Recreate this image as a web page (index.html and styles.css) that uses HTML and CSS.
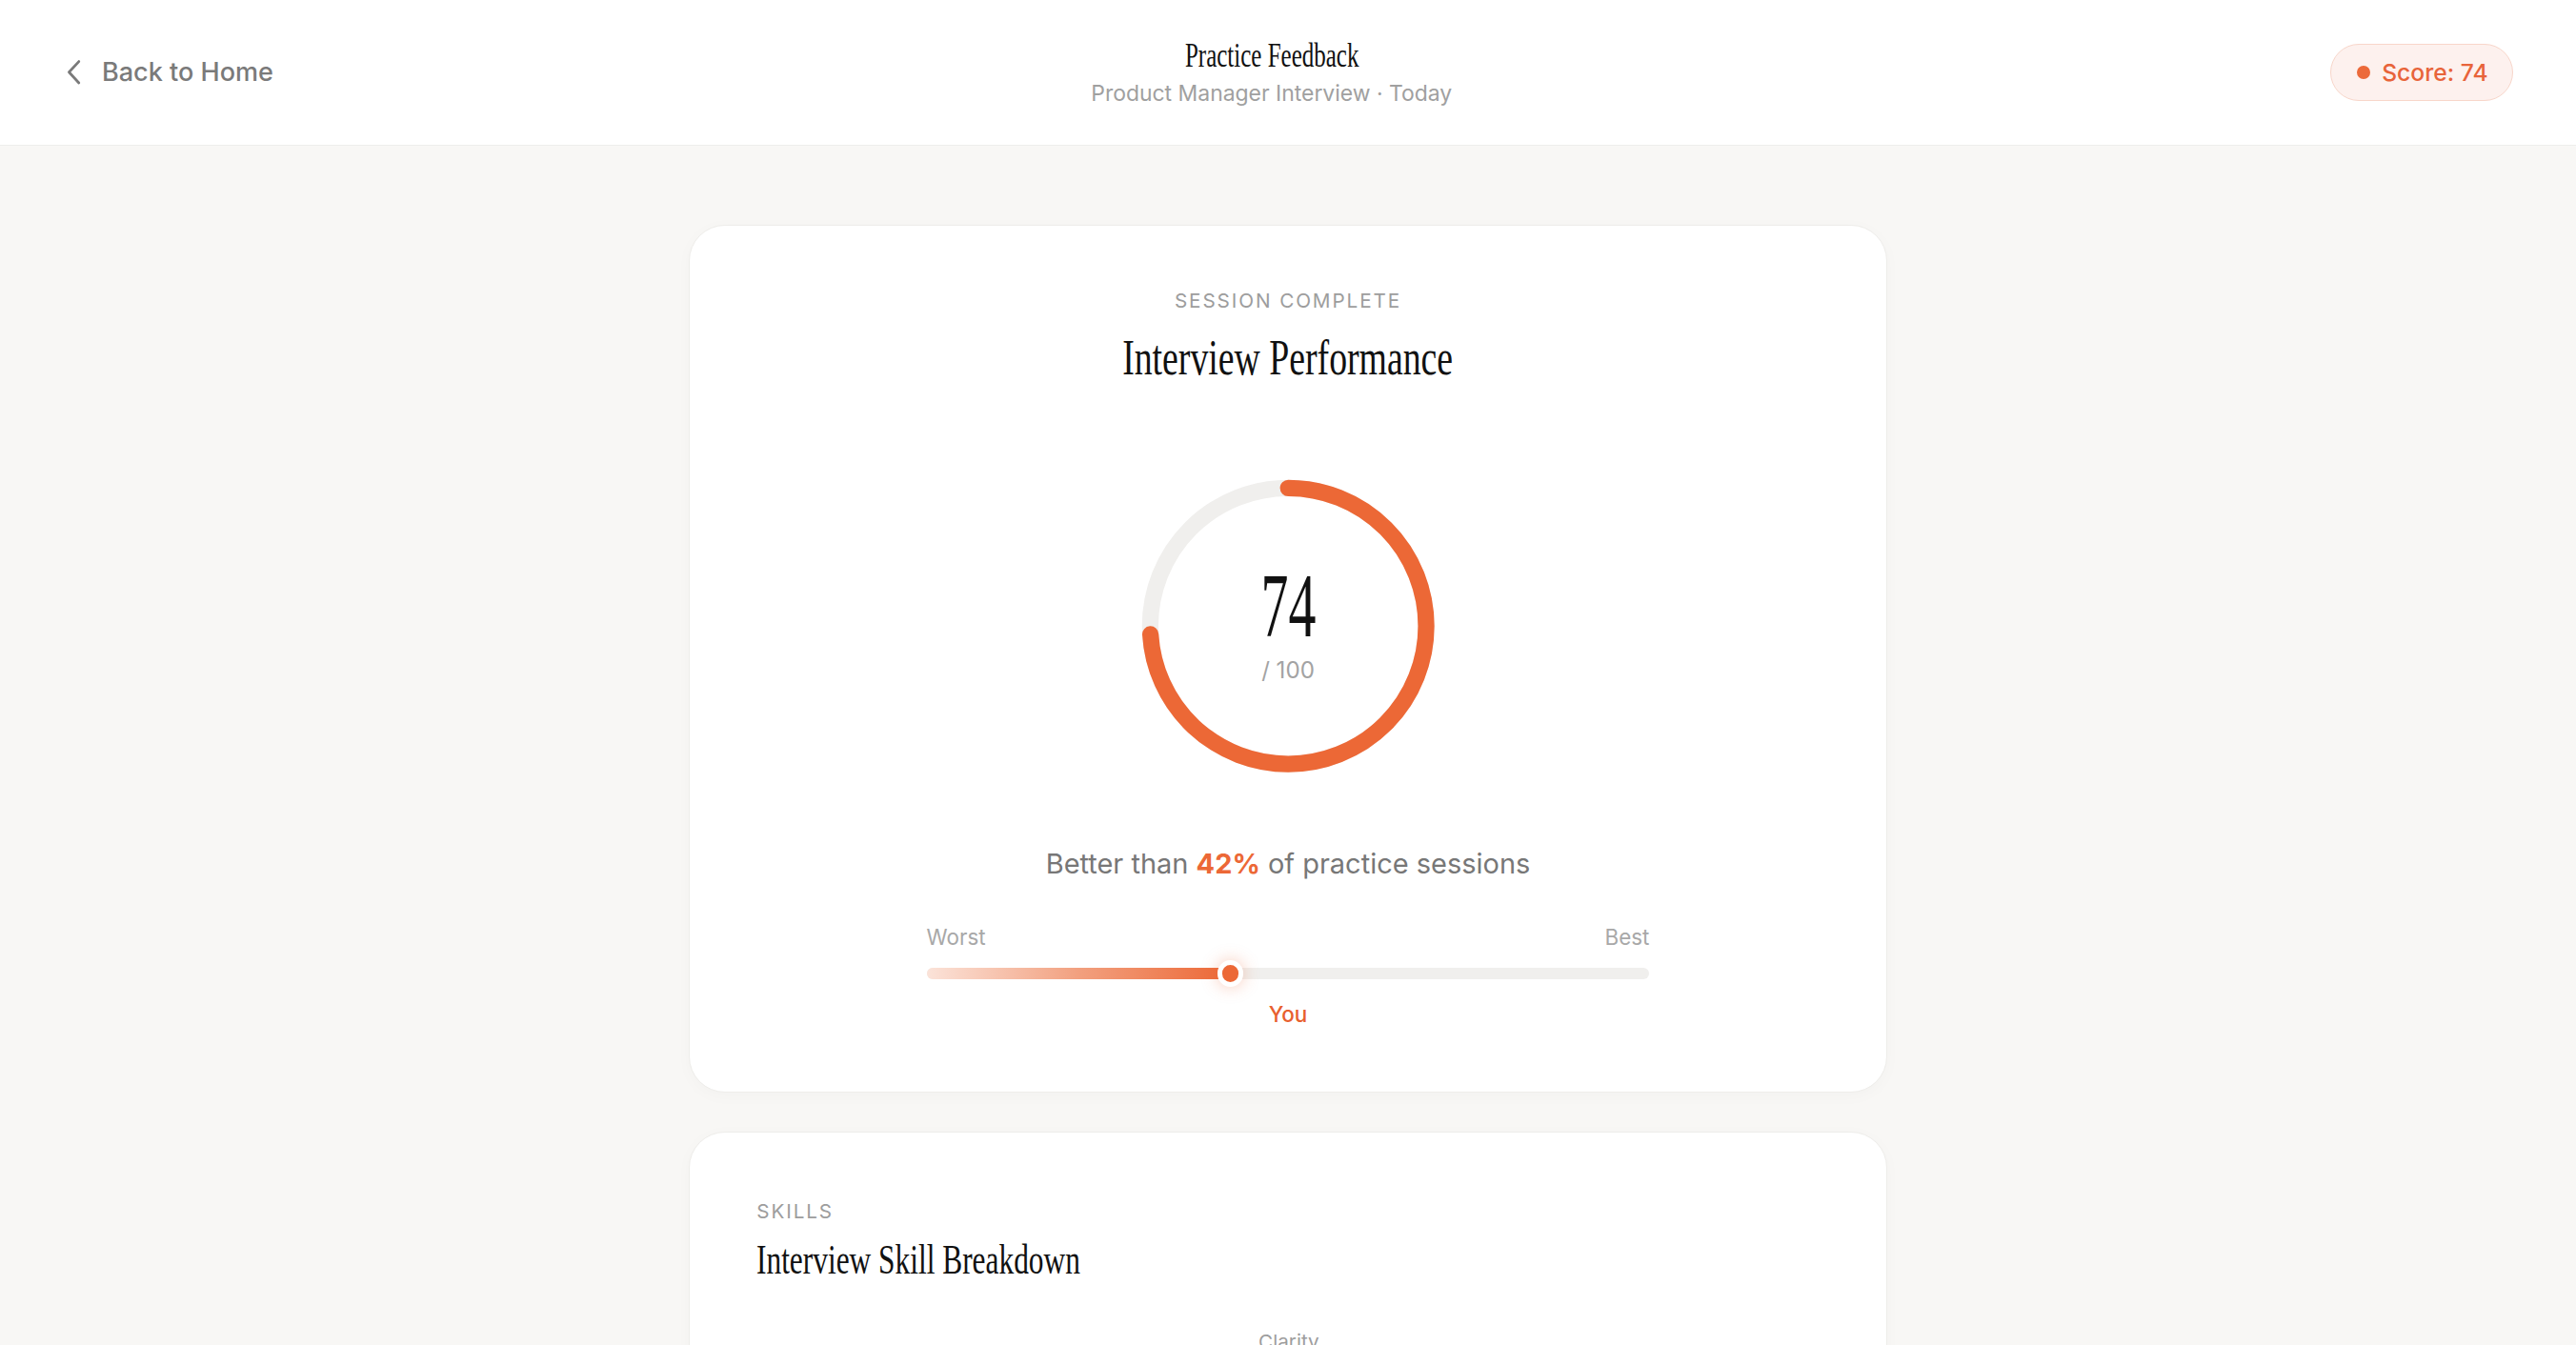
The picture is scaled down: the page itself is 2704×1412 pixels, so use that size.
FILE: index.html
```html
<!DOCTYPE html>
<html lang="en">
<head>
<meta charset="utf-8">
<title>Practice Feedback</title>
<link rel="stylesheet" href="styles.css">
</head>
<body>
<header class="topbar">
  <div class="topbar-left">
    <a class="back-link" href="#">
      <svg class="back-icon" viewBox="0 0 10 16" width="10" height="16" aria-hidden="true"><path d="M8 1.5 L2 8 L8 14.5" fill="none" stroke="currentColor" stroke-width="1.6" stroke-linecap="round" stroke-linejoin="round"/></svg>
      <span>Back to Home</span>
    </a>
  </div>
  <div class="topbar-center">
    <div class="page-title"><span class="serif">Practice Feedback</span></div>
    <div class="page-subtitle">Product Manager Interview · Today</div>
  </div>
  <div class="topbar-right">
    <div class="score-pill"><span class="score-dot"></span><span>Score: 74</span></div>
  </div>
</header>

<main class="content">
  <section class="card perf-card">
    <div class="eyebrow">Session Complete</div>
    <h1 class="card-title"><span class="serif">Interview Performance</span></h1>

    <div class="ring">
      <svg class="ring-svg" viewBox="0 0 180 180" width="180" height="180" aria-hidden="true">
        <circle class="ring-track" cx="90" cy="90" r="84"/>
        <circle class="ring-progress" cx="90" cy="90" r="84" stroke-dasharray="390.6 527.8" transform="rotate(-90 90 90)"/>
      </svg>
      <div class="ring-center">
        <div class="ring-score"><span class="serif">74</span></div>
        <div class="ring-max">/ 100</div>
      </div>
    </div>

    <p class="better">Better than <strong>42%</strong> of practice sessions</p>

    <div class="scale">
      <div class="scale-labels"><span>Worst</span><span>Best</span></div>
      <div class="scale-track">
        <div class="scale-fill" style="width:42%"></div>
        <div class="scale-knob" style="left:42%"></div>
      </div>
      <div class="scale-you">You</div>
    </div>
  </section>

  <section class="card skills-card">
    <div class="eyebrow eyebrow-left">Skills</div>
    <h2 class="section-title"><span class="serif serif-left">Interview Skill Breakdown</span></h2>
    <div class="radar">
      <div class="radar-label">Clarity</div>
      <svg class="radar-svg" viewBox="0 0 300 280" width="300" height="280" aria-hidden="true">
        <polygon points="150,10 283,105 232,262 68,262 17,105" fill="none" stroke="#eeeeec"/>
        <polygon points="150,60 236,122 203,222 97,222 64,122" fill="none" stroke="#eeeeec"/>
        <polygon points="150,40 250,115 215,240 90,230 50,110" fill="rgba(236,106,58,0.15)" stroke="#ec6a3a" stroke-width="2"/>
      </svg>
    </div>
  </section>
</main>
</body>
</html>
```

FILE: styles.css
```css
html {
  zoom: 1.7245;
}

body {
  margin: 0;
  background: #f8f7f5;
  font-family: Inter, "Noto Sans", "Liberation Sans", sans-serif;
  color: #1a1a1a;
}

.serif {
  display: inline-block;
  font-family: "Liberation Serif", "Times New Roman", serif;
  font-weight: 400;
  color: #111;
  transform: scaleX(0.72);
  transform-origin: center center;
}

.serif-left {
  transform-origin: left center;
}

/* ---------- Top bar ---------- */
.topbar {
  display: grid;
  grid-template-columns: 1fr auto 1fr;
  align-items: center;
  height: 88px;
  padding: 0 38px 0 40px;
  background: #ffffff;
  border-bottom: 1px solid #eeeeec;
}

.topbar-left {
  display: flex;
  align-items: center;
}

.back-link {
  display: inline-flex;
  align-items: center;
  gap: 12px;
  color: #7a7a7a;
  text-decoration: none;
  font-size: 15.7px;
  font-weight: 500;
}

.back-icon {
  display: block;
}

.topbar-center {
  text-align: center;
  margin-right: 22px;
}

.page-title {
  font-size: 21px;
  line-height: 24px;
}

.page-title .serif {
  transform: scaleX(0.69);
}

.page-subtitle {
  margin-top: 2px;
  font-size: 13.3px;
  line-height: 18px;
  color: #a0a0a0;
}

.topbar-right {
  display: flex;
  justify-content: flex-end;
}

.score-pill {
  display: inline-flex;
  align-items: center;
  gap: 7px;
  height: 34px;
  padding: 0 15px 0 16px;
  border: 1px solid #f8d6ca;
  border-radius: 999px;
  background: #fdf1ee;
  color: #e8643a;
  font-size: 14.3px;
  font-weight: 500;
}

.score-dot {
  width: 8px;
  height: 8px;
  border-radius: 50%;
  background: #ec6a3a;
}

/* ---------- Content ---------- */
.content {
  display: flex;
  flex-direction: column;
  align-items: center;
  gap: 24px;
  padding: 48px 0 60px;
}

.card {
  box-sizing: border-box;
  width: 730px;
  background: #ffffff;
  border: 1px solid #eeedea;
  border-radius: 22px;
  box-shadow: 0 2px 10px rgba(0, 0, 0, 0.025);
}

.perf-card {
  padding: 37px 40px 38px;
  text-align: center;
}

.eyebrow {
  font-size: 12px;
  line-height: 18px;
  font-weight: 400;
  letter-spacing: 1.1px;
  text-transform: uppercase;
  color: #9d9d9d;
}

.card-title {
  margin: 7px 0 0;
  font-size: 30px;
  line-height: 36px;
  font-weight: 400;
}

.card-title .serif {
  transform: scaleX(0.73);
}

/* ring */
.ring {
  position: relative;
  width: 180px;
  height: 180px;
  margin: 55px auto 0;
}

.ring-svg {
  display: block;
}

.ring-track {
  fill: none;
  stroke: #f0efed;
  stroke-width: 10;
}

.ring-progress {
  fill: none;
  stroke: #ec6836;
  stroke-width: 10;
  stroke-linecap: round;
}

.ring-center {
  position: absolute;
  inset: 0;
  display: flex;
  flex-direction: column;
  align-items: center;
  justify-content: center;
  padding-bottom: 4px;
  box-sizing: border-box;
}

.ring-score {
  font-size: 55px;
  line-height: 52px;
  margin-bottom: 4px;
}

.ring-score .serif {
  transform: scaleX(0.61);
}

.ring-max {
  font-size: 14px;
  line-height: 18px;
  color: #a3a3a3;
}

.better {
  margin: 42px 0 0;
  font-size: 16.8px;
  line-height: 26px;
  color: #777777;
}

.better strong {
  color: #ec6836;
  font-weight: 700;
}

/* scale */
.scale {
  width: 440px;
  margin: 22px auto 0;
}

.scale-labels {
  display: flex;
  justify-content: space-between;
  font-size: 13px;
  line-height: 18px;
  color: #a8a8a8;
}

.scale-track {
  position: relative;
  height: 7px;
  margin-top: 10px;
  border-radius: 4px;
  background: #f0efed;
}

.scale-fill {
  height: 100%;
  border-radius: 4px 0 0 4px;
  background: linear-gradient(90deg, #fbe3d9 0%, #f2a07f 50%, #ec6836 100%);
}

.scale-knob {
  position: absolute;
  top: 50%;
  box-sizing: border-box;
  width: 16px;
  height: 16px;
  margin: -8px 0 0 -8px;
  border: 3px solid #ffffff;
  border-radius: 50%;
  background: #ec6836;
  box-shadow: 0 0 10px rgba(236, 104, 54, 0.35);
}

.scale-you {
  margin-top: 12px;
  font-size: 13px;
  line-height: 18px;
  font-weight: 500;
  color: #e8602f;
}

/* skills */
.skills-card {
  padding: 39px 40px 40px 41px;
}

.eyebrow-left {
  text-align: left;
}

.section-title {
  margin: 3px 0 0;
  font-size: 26px;
  line-height: 34px;
  font-weight: 400;
}

.section-title .serif {
  transform: scaleX(0.70);
}

.radar {
  display: flex;
  flex-direction: column;
  align-items: center;
  margin-top: 25px;
}

.radar-label {
  font-size: 12px;
  line-height: 16px;
  color: #9d9d9d;
}

.radar-svg {
  display: block;
  margin-top: 8px;
}
```
